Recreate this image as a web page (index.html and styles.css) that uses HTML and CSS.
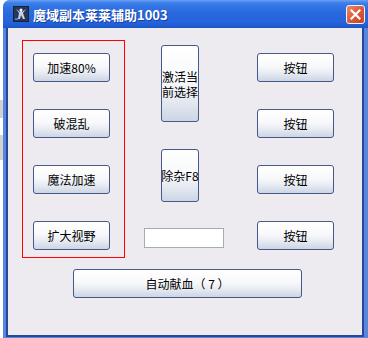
FILE: index.html
```html
<!DOCTYPE html>
<html>
<head>
    <meta charset="utf-8">
    <title>魔域副本莱莱辅助1003</title>
    <link rel="stylesheet" href="styles.css">
</head>
<body>
    <div class="desk"></div>
    <div class="window">
        <div class="titlebar">
            <svg class="appicon" width="16" height="16" viewBox="0 0 16 16">
                <rect width="16" height="16" fill="#1b2238"/>
                <rect x="1" y="1" width="14" height="14" fill="#27375c"/>
                <path d="M3 3 L6 7 L5 13 L7 13 L8 9 L10 13 L12 13 L10 7 L13 3 L9 6 L8 4 L7 6 Z" fill="#c9d3e6"/>
                <circle cx="8" cy="4" r="1.5" fill="#ffffff"/>
                <rect x="2" y="12" width="3" height="2" fill="#4f78c8"/>
            </svg>
            <span class="title">魔域副本莱莱辅助1003</span>
            <div class="close">
                <svg width="11" height="11" viewBox="0 0 11 11">
                    <path d="M1.5 1.5 L9.5 9.5 M9.5 1.5 L1.5 9.5" stroke="#fff" stroke-width="2.2" stroke-linecap="square"/>
                </svg>
            </div>
        </div>
        <div class="client">
            <div class="toprow">
                <div class="redbox">
                    <button class="btn">加速80%</button>
                    <button class="btn">破混乱</button>
                    <button class="btn">魔法加速</button>
                    <button class="btn">扩大视野</button>
                </div>
                <div class="middle">
                    <button class="btn tall">激活当前选择</button>
                    <button class="btn short">除杂F8</button>
                    <input class="edit" type="text">
                </div>
                <div class="right">
                    <button class="btn">按钮</button>
                    <button class="btn">按钮</button>
                    <button class="btn">按钮</button>
                    <button class="btn">按钮</button>
                </div>
            </div>
            <button class="btn wide">自动献血（ 7 ）</button>
        </div>
    </div>
</body>
</html>
```

FILE: styles.css
```css
body
{
    margin: 0;
    display: flex;
    background: #ffffff;
    font-family: "Noto Sans CJK SC", "Liberation Sans", sans-serif;
    font-size: 12px;
    overflow: hidden;
}

.desk
{
    width: 3px;
    height: 338px;
    flex: none;
    background: linear-gradient(#ffffff 0, #ffffff 100px, #d4d2ce 100px, #d4d2ce 118px,
        #ffffff 118px, #ffffff 135px, #d4d2ce 135px, #d4d2ce 160px, #ffffff 160px);
}

.window
{
    width: 365px;
    height: 338px;
    flex: none;
    display: flex;
    flex-direction: column;
    background: #5786dc;
    border-radius: 7px 0 0 0;
    overflow: hidden;
}

.titlebar
{
    height: 28px;
    flex: none;
    display: flex;
    align-items: center;
    padding-left: 10px;
    background: linear-gradient(#6aa2f4 0, #3b7de9 3px, #2a6be0 40%, #2463dc 80%, #1d55c8 100%);
}

.appicon
{
    flex: none;
    margin-right: 4px;
}

.title
{
    color: #ffffff;
    font-weight: bold;
    font-size: 13px;
    text-shadow: 1px 1px 0 #1a3f9a;
}

.close
{
    margin-left: auto;
    margin-right: 3px;
    width: 19px;
    height: 19px;
    box-sizing: border-box;
    border: 1px solid #f2f2f2;
    border-radius: 3px;
    background: linear-gradient(135deg, #ea8a6c 0, #dc5b3a 50%, #c8411f 100%);
    display: flex;
    align-items: center;
    justify-content: center;
}

.client
{
    flex: 1;
    margin: 0 4px 1px 3px;
    border: 2px solid #26479a;
    border-top: none;
    background: #edebf0;
    padding: 12px 0 0 14px;
}

.toprow
{
    display: flex;
    align-items: flex-start;
}

.redbox
{
    width: 91px;
    height: 204px;
    border: 1px solid #ff0000;
    padding: 12px 0 0 10px;
    display: flex;
    flex-direction: column;
    gap: 27px;
}

.middle
{
    margin: 5px 0 0 19px;
    display: flex;
    flex-direction: column;
    align-items: flex-start;
}

.right
{
    margin: 13px 0 0 33px;
    display: flex;
    flex-direction: column;
    gap: 27px;
}

.btn
{
    width: 77px;
    height: 29px;
    flex: none;
    padding: 0;
    box-sizing: border-box;
    border: 1px solid #45598a;
    border-radius: 3px;
    background: linear-gradient(#ffffff 0, #f8f9fb 45%, #e6eaf1 72%, #cdd5e4 100%);
    color: #000000;
    font-family: "Noto Sans CJK SC", "Liberation Sans", sans-serif;
    font-size: 12px;
    line-height: 14px;
    display: flex;
    align-items: center;
    justify-content: center;
    white-space: nowrap;
}

.tall
{
    width: 38px;
    height: 77px;
    margin-left: 17px;
    white-space: normal;
    line-height: 15px;
    text-align: center;
}

.short
{
    width: 38px;
    height: 53px;
    margin: 27px 0 0 17px;
}

.edit
{
    width: 80px;
    height: 20px;
    margin-top: 26px;
    box-sizing: border-box;
    border: 1px solid #a7abb2;
    background: #ffffff;
    padding: 0 2px;
}

.wide
{
    width: 229px;
    margin: 11px 0 0 51px;
}
```
